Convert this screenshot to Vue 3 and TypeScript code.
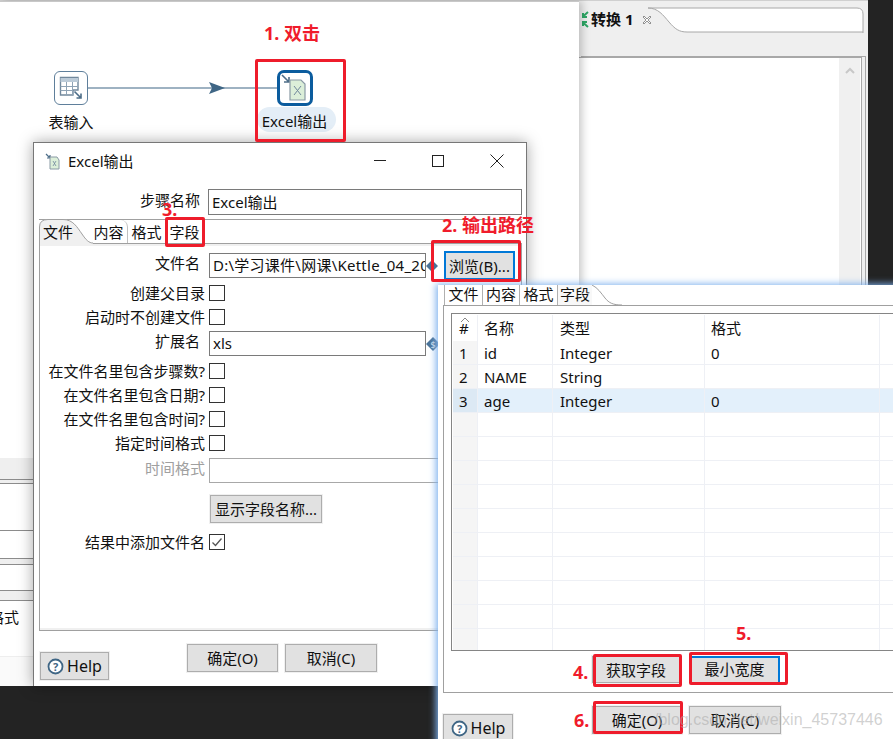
<script setup lang="ts">
const leftRows = ['创建父目录', '启动时不创建文件'];
const lowerRows = ['在文件名里包含步骤数?', '在文件名里包含日期?', '在文件名里包含时间?', '指定时间格式'];
const tabs = ['内容', '格式', '字段'];
const fields = [
  { n: '1', name: 'id', type: 'Integer', fmt: '0' },
  { n: '2', name: 'NAME', type: 'String', fmt: '' },
  { n: '3', name: 'age', type: 'Integer', fmt: '0', sel: true },
];
const emptyRows = Array.from({ length: 10 }, (_, i) => i);
// strips of the window hidden behind the dialog
const behindRows = [
  { h: 22, gray: true },
  { h: 4, gray: true },
  { h: 47 },
  { h: 28 },
  { h: 6, gray: true },
  { h: 26 },
  { h: 10, gray: true },
];
const notes = [
  { text: '1. 双击', x: 264, y: 21 },
  { text: '3.', x: 162, y: 197 },
  { text: '2. 输出路径', x: 442, y: 213 },
  { text: '5.', x: 736, y: 621 },
  { text: '4.', x: 573, y: 660 },
  { text: '6.', x: 574, y: 708 },
];
const boxes = [
  { x: 255, y: 59, w: 91, h: 83 },
  { x: 165, y: 217, w: 40, h: 30 },
  { x: 431, y: 240, w: 90, h: 42 },
  { x: 593, y: 654, w: 89, h: 33 },
  { x: 689, y: 652, w: 99, h: 33 },
  { x: 593, y: 701, w: 90, h: 33 },
];
</script>

<template>
  <div class="screen">
    <!-- spoon behind the dialogs -->
    <div class="spoon">
      <div class="pane">
        <div class="tabstrip">
          <svg class="tabcurve" width="285" height="26" viewBox="0 0 285 26">
            <path d="M69 1C79 1 84 8 90 15C96 22 100 25 108 25H284V6Q284 1 279 1Z" fill="#fff" />
            <path d="M69 1C79 1 84 8 90 15C96 22 100 25 108 25H284M69 1H278Q284 1 284 7V26" fill="none" stroke="#a8a8a8" />
          </svg>
          <svg class="transicon" width="10" height="17" viewBox="0 0 10 17">
            <path d="M8 1L3 5.500M3 2V6H7M8 16L3 11.500M3 15V11H7" fill="none" stroke="#2fa866" stroke-width="2" />
          </svg>
          <span class="tabname">转换 1</span>
          <svg class="tabclose" width="10" height="10" viewBox="0 0 10 10">
            <path d="M1 2L2 1L5 4L8 1L9 2L6 5L9 8L8 9L5 6L2 9L1 8L4 5Z" fill="#fff" stroke="#777" stroke-width=".8" />
          </svg>
        </div>
        <div class="editor">
          <div class="scrollbar">
            <svg width="10" height="7" viewBox="0 0 10 7"><path d="M1 6L5 2L9 6" fill="none" stroke="#c8c8c8" stroke-width="2" /></svg>
          </div>
        </div>
      </div>
    </div>

    <div class="canvas">
      <svg class="hop" width="192" height="16" viewBox="0 0 192 16">
        <path d="M0 8H190" stroke="#3f6685" stroke-width="1.200" />
        <path d="M121 2L137 8L121 14L124 8Z" fill="#3f6685" />
      </svg>
      <div class="node node-in">
        <svg width="24" height="24" viewBox="0 0 24 24">
          <path d="M1.500 1.500H19V14H14V19H1.500Z" fill="#fff" stroke="#71889c" stroke-width="1.400" />
          <path d="M1.500 2H19V6H1.500Z" fill="#bccbd8" />
          <path d="M1.500 10.500H19M1.500 14.500H14M7.500 6V19M13.500 6V19" stroke="#8fa3b5" />
          <path d="M15.500 15.500L22 22M22 17.500V22H17.500" fill="none" stroke="#4d6d88" stroke-width="1.600" />
        </svg>
      </div>
      <div class="nodelabel label-in">表输入</div>
      <div class="node node-out">
        <svg width="28" height="28" viewBox="0 0 28 28">
          <path d="M1 1L8 8M8 3V8H3" fill="none" stroke="#4d6d88" stroke-width="1.600" />
          <path d="M9 6H20L24 10V26H9Z" fill="#dcefd9" stroke="#8a9aa5" stroke-width="1.200" />
          <path d="M13 12L20 21M20 12L13 21" stroke="#71889c" />
        </svg>
      </div>
      <div class="nodelabel label-out">Excel输出</div>
    </div>

    <div class="behind">
      <div v-for="(r, i) in behindRows" :key="i" class="b-row" :class="{ 'b-gray': r.gray }" :style="{ height: r.h + 'px' }"></div>
      <div class="b-fmt"><span>格式</span></div>
      <div class="b-foot"></div>
    </div>

    <!-- excel output dialog -->
    <section class="dialog d1">
      <header class="titlebar">
        <svg class="ticon" width="16" height="17" viewBox="0 0 16 17">
          <path d="M1 1L5 5M5 2V5H2" fill="none" stroke="#4d6d88" stroke-width="1.200" />
          <path d="M5 4H12L14 7V16H5Z" fill="#dcefd9" stroke="#8a9aa5" />
          <path d="M8 8L11 13M11 8L8 13" stroke="#71889c" stroke-width=".8" />
        </svg>
        <span class="ttext">Excel输出</span>
        <svg class="wctl" width="130" height="14" viewBox="0 0 130 14">
          <path d="M0 6.500H12" stroke="#222" />
          <rect x="58.500" y="1.500" width="11" height="11" fill="none" stroke="#222" />
          <path d="M116.500 .5L129.500 13.500M129.500 .5L116.500 13.500" stroke="#222" />
        </svg>
      </header>
      <div class="stepname">
        <span class="stepname-label">步骤名称</span>
        <div class="input stepname-input">Excel输出</div>
      </div>
      <div class="folder">
        <div class="tabs">
          <div class="tab tab-on">
            <svg class="tab-curve" width="54" height="26" viewBox="0 0 54 26">
              <path d="M0 26V8Q0 .5 9 .5H24C34 .5 38 8 43 15C47 21 50 24 54 24V26Z" fill="#f0f0f0" />
              <path d="M.5 26V8Q.5 .5 9 .5H24C34 .5 38 8 43 15C47 21 50 24 54 24" fill="none" stroke="#a0a0a0" />
            </svg>
            <span>文件</span>
          </div>
          <div v-for="t in tabs" :key="t" class="tab">{{ t }}</div>
        </div>
        <div class="panel">
          <div class="row row-first">
            <span class="lab lab-in">文件名</span>
            <div class="input file-input path-input">D:\学习课件\网课\Kettle_04_20</div>
            <svg class="diamond" width="12" height="12" viewBox="0 0 12 12"><path d="M6 0L12 6L6 12L0 6Z" fill="#4a7297" /></svg>
            <button class="btn browse">浏览(B)...</button>
          </div>
          <div class="checks-top">
            <div v-for="r in leftRows" :key="r" class="row row-check">
              <span class="lab">{{ r }}</span><span class="check"></span>
            </div>
          </div>
          <div class="row row-ext">
            <span class="lab lab-in">扩展名</span>
            <div class="input file-input">xls</div>
            <svg class="diamond" width="14" height="14" viewBox="0 0 14 14">
              <path d="M7 0L14 7L7 14L0 7Z" fill="#4a7297" />
              <text x="7" y="10.500" text-anchor="middle" font-size="9" fill="#dde6ee">$</text>
            </svg>
          </div>
          <div class="lower">
            <div v-for="l in lowerRows" :key="l" class="row row-check">
              <span class="lab">{{ l }}</span><span class="check"></span>
            </div>
          </div>
          <div class="row row-time">
            <span class="lab lab-off">时间格式</span>
            <div class="input time-input"></div>
          </div>
          <button class="btn show">显示字段名称...</button>
          <div class="row row-result">
            <span class="lab">结果中添加文件名</span>
            <span class="check">
              <svg width="14" height="14" viewBox="0 0 14 14"><path d="M2.500 7.500L5.500 10.500L11.500 3.500" fill="none" stroke="#555" stroke-width="1.300" /></svg>
            </span>
          </div>
        </div>
      </div>
      <footer class="foot1">
        <button class="btn help">
          <svg width="17" height="17" viewBox="0 0 17 17">
            <circle cx="8.500" cy="8.500" r="7" fill="#fff" stroke="#3f6685" stroke-width="1.800" />
            <text x="8.500" y="12.500" text-anchor="middle" font-size="11" font-weight="700" fill="#3f6685">?</text>
          </svg>
          <span>Help</span>
        </button>
        <button class="btn ok1">确定(O)</button>
        <button class="btn cancel1">取消(C)</button>
      </footer>
    </section>

    <!-- fields tab, pasted on top -->
    <section class="dialog d2">
      <div class="tabs2">
        <div class="tab2">文件</div>
        <div class="tab2 tab2-mid">内容</div>
        <div class="tab2">格式</div>
        <div class="tab2 tab2-on">
          字段
          <svg class="tab2-curve" width="30" height="21" viewBox="0 0 30 21">
            <path d="M0 0C6 3 9 8 13 13C17 18 21 20 30 20" fill="none" stroke="#a0a0a0" />
          </svg>
        </div>
      </div>
      <div class="panel2">
        <div class="grid">
          <div class="g-row g-head">
            <div class="c c0">
              <svg class="sort" width="10" height="5" viewBox="0 0 10 5"><path d="M1 5L5 1L9 5" fill="none" stroke="#888" /></svg>
              #
            </div>
            <div class="c c1">名称</div>
            <div class="c c2">类型</div>
            <div class="c c3">格式</div>
            <div class="c c4"></div>
          </div>
          <div v-for="f in fields" :key="f.n" class="g-row" :class="{ 'g-sel': f.sel }">
            <div class="c c0">{{ f.n }}</div>
            <div class="c c1">{{ f.name }}</div>
            <div class="c c2">{{ f.type }}</div>
            <div class="c c3">{{ f.fmt }}</div>
            <div class="c c4"></div>
          </div>
          <div v-for="i in emptyRows" :key="i" class="g-row">
            <div class="c c0"></div>
            <div class="c c1"></div>
            <div class="c c2"></div>
            <div class="c c3"></div>
            <div class="c c4"></div>
          </div>
        </div>
        <div class="gridbtns">
          <button class="btn getf">获取字段</button>
          <button class="btn minw">最小宽度</button>
        </div>
      </div>
      <footer class="foot2">
        <button class="btn help help2">
          <svg width="17" height="17" viewBox="0 0 17 17">
            <circle cx="8.500" cy="8.500" r="7" fill="#fff" stroke="#3f6685" stroke-width="1.800" />
            <text x="8.500" y="12.500" text-anchor="middle" font-size="11" font-weight="700" fill="#3f6685">?</text>
          </svg>
          <span>Help</span>
        </button>
        <button class="btn ok2">确定(O)</button>
        <button class="btn cancel2">取消(C)</button>
      </footer>
    </section>

    <!-- red annotations -->
    <div v-for="b in boxes" :key="b.x + '-' + b.y" class="redbox" :style="{ left: b.x + 'px', top: b.y + 'px', width: b.w + 'px', height: b.h + 'px' }"></div>
    <div v-for="n in notes" :key="n.text" class="note" :style="{ left: n.x + 'px', top: n.y + 'px' }">{{ n.text }}</div>
    <div class="watermark">/blog.csdn.net/weixin_45737446</div>
  </div>
</template>

<style>
html,
body {
  margin: 0;
  background: #1f1f1f;
}
</style>

<style scoped>
.screen {
  position: relative;
  width: 893px;
  height: 739px;
  overflow: hidden;
  background: #232323;
  color: #111;
  font-family: "Noto Sans", "Noto Sans CJK SC", sans-serif;
  font-size: 15px;
  line-height: 20px;
}

button {
  font: inherit;
  color: inherit;
  padding: 0;
}

.spoon {
  position: absolute;
  left: 0;
  top: 0;
  width: 868px;
  height: 686px;
  background: #efefef;
  border-top: 1px solid #d0d0d0;
  box-sizing: border-box;
}

.pane {
  margin-left: 579px;
  width: 285px;
  height: 100%;
  padding-top: 6px;
  box-sizing: border-box;
  display: flex;
  flex-direction: column;
}

.tabstrip {
  position: relative;
  height: 25px;
  display: flex;
  align-items: center;
  flex: none;
}

.tabcurve {
  position: absolute;
  left: 0;
  top: 0;
}

.transicon {
  position: relative;
  margin-left: 1px;
}

.tabname {
  position: relative;
  margin-left: 1px;
  margin-top: -2px;
  font-weight: 700;
}

.tabclose {
  position: relative;
  margin-left: 9px;
}

.editor {
  margin-top: 25px;
  width: 282px;
  flex: 1;
  background: #fff;
  border-top: 1px solid #a8a8a8;
  border-right: 1px solid #a8a8a8;
  display: flex;
  justify-content: flex-end;
  box-shadow: 3px 0 0 #efefef, 3px 0 0 1px #a8a8a8;
}

.scrollbar {
  width: 21px;
  background: #f0f0f0;
  display: flex;
  justify-content: center;
  padding-top: 9px;
  margin-right: 1px;
}

.canvas {
  position: absolute;
  left: 0;
  top: 1px;
  width: 579px;
  height: 457px;
  background: #fff;
  border-top: 1px solid #c8c8c8;
  box-shadow: 3px 0 8px rgba(0, 0, 0, 0.22);
}

.hop {
  position: absolute;
  left: 88px;
  top: 78px;
}

.node {
  position: absolute;
  background: #fff;
  display: flex;
  align-items: center;
  justify-content: center;
  box-sizing: border-box;
}

.node-in {
  left: 54px;
  top: 69px;
  width: 34px;
  height: 34px;
  border: 1px solid #5f7f9b;
  border-radius: 6px;
}

.node-out {
  left: 277px;
  top: 68px;
  width: 36px;
  height: 36px;
  border: 3px solid #0b5c9e;
  border-radius: 7px;
}

.nodelabel {
  position: absolute;
  text-align: center;
}

.label-in {
  left: 41px;
  top: 110px;
  width: 60px;
}

.label-out {
  left: 257px;
  top: 105px;
  width: 79px;
  height: 25px;
  line-height: 29px;
  padding-right: 4px;
  box-sizing: border-box;
  border-radius: 13px;
  background: #e4eef7;
}

.behind {
  position: absolute;
  left: 0;
  top: 458px;
  width: 40px;
  height: 228px;
  background: #fff;
  display: flex;
  flex-direction: column;
}

.b-row {
  box-sizing: border-box;
  border-bottom: 1px solid #8c8c8c;
  flex: none;
}

.b-gray {
  background: #efefef;
}

.b-fmt {
  height: 56px;
  padding-top: 6px;
  box-sizing: border-box;
  border-bottom: 1px solid #eeeeee;
  overflow: hidden;
  flex: none;
}

.b-fmt span {
  margin-left: -11px;
}

.b-foot {
  flex: 1;
  background: #fafafa;
}

.dialog {
  position: absolute;
  box-sizing: border-box;
  background: #fff;
}

.d1 {
  left: 33px;
  top: 142px;
  width: 494px;
  height: 544px;
  border: 1px solid #777;
  border-bottom: 0;
  box-shadow: 0 0 14px rgba(0, 0, 0, 0.35);
  display: flex;
  flex-direction: column;
}

.titlebar {
  height: 37px;
  display: flex;
  align-items: center;
  padding-left: 11px;
  flex: none;
}

.ticon {
  flex: none;
}

.ttext {
  margin-left: 7px;
  margin-top: -2px;
  flex: 1;
}

.wctl {
  margin-right: 22px;
  margin-top: -1px;
}

.stepname {
  margin: 9px 4px 0 0;
  display: flex;
  align-items: center;
  height: 25px;
  flex: none;
}

.stepname-label {
  width: 166px;
  text-align: right;
  margin-top: -4px;
}

.input {
  box-sizing: border-box;
  border: 1px solid #7a7a7a;
  height: 25px;
  line-height: 25px;
  padding-left: 3px;
  background: #fff;
  white-space: nowrap;
  overflow: hidden;
}

.stepname-input {
  margin-left: 8px;
  width: 314px;
  height: 26px;
}

.folder {
  margin: 5px 4px 0 5px;
  width: 483px;
  display: flex;
  flex-direction: column;
  flex: none;
}

.tabs {
  display: flex;
  height: 25px;
  box-sizing: border-box;
  border-top: 1px solid #a0a0a0;
  border-bottom: 1px solid #a0a0a0;
}

.tab {
  position: relative;
  width: 38px;
  text-align: center;
  line-height: 24px;
  border-right: 1px solid #c0c0c0;
  box-sizing: border-box;
  flex: none;
}

.tab:nth-child(2) {
  border-top-right-radius: 7px;
}

.tab-on {
  width: 51px;
  text-align: left;
  padding-left: 4px;
  border-right: 0;
}

.tab-on span {
  position: relative;
}

.tab-curve {
  position: absolute;
  left: 0;
  top: -1px;
}

.panel {
  height: 387px;
  box-sizing: border-box;
  border-left: 1px solid #a0a0a0;
  border-bottom: 1px solid #a0a0a0;
  border-right: 1px solid #a0a0a0;
  padding-top: 9px;
  position: relative;
  box-shadow: inset 0 2px 0 #f0f0f0, inset 0 -2px 0 #f0f0f0;
}

.row {
  display: flex;
  align-items: center;
}

.lab {
  width: 165px;
  flex: none;
  text-align: right;
  white-space: nowrap;
  margin-top: -1px;
}

.lab-in {
  padding-right: 5px;
  box-sizing: border-box;
  margin-top: -5px;
}

.lab-off {
  color: #a0a0a0;
  margin-top: -6px;
}

.row-first {
  height: 25px;
}

.file-input {
  margin-left: 4px;
  width: 217px;
  line-height: 23px;
}

.path-input {
  letter-spacing: 0.25px;
}

.diamond {
  flex: none;
}

.btn {
  box-sizing: border-box;
  background: #e1e1e1;
  border: 1px solid #adadad;
  outline: 1px solid #f0f0f0;
  display: block;
}

.browse {
  margin-left: 6px;
  width: 71px;
  height: 29px;
  border: 2px solid #0078d7;
  outline: 0;
  white-space: nowrap;
  flex: none;
}

.checks-top {
  margin-top: 3px;
}

.row-check {
  height: 24px;
}

.check {
  margin-left: 4px;
  width: 16px;
  height: 16px;
  box-sizing: border-box;
  border: 1px solid #333;
  background: #fff;
  display: block;
  flex: none;
}

.check svg {
  display: block;
}

.row-ext {
  height: 25px;
  margin-top: 2px;
}

.lower {
  margin-top: 3px;
}

.row-time {
  margin-top: 3px;
}

.time-input {
  margin-left: 4px;
  width: 240px;
  border-color: #a8a8a8;
}

.show {
  margin: 12px 0 0 170px;
  width: 112px;
  height: 28px;
  white-space: nowrap;
}

.row-result {
  margin-top: 11px;
  height: 16px;
}

.foot1 {
  display: flex;
  align-items: flex-start;
  padding-left: 6px;
}

.help {
  display: flex;
  align-items: center;
  gap: 3px;
  justify-content: center;
  width: 69px;
  height: 28px;
  margin-top: 21px;
  font-size: 16px;
}

.help span {
  margin-top: -1px;
}

.ok1 {
  margin: 13px 0 0 78px;
  width: 91px;
  height: 28px;
}

.cancel1 {
  margin: 13px 0 0 7px;
  width: 92px;
  height: 28px;
}

.d2 {
  left: 438px;
  top: 285px;
  width: 470px;
  height: 470px;
  box-shadow: -2px -1px 7px #7fb2ee;
  z-index: 2;
}

.tabs2 {
  display: flex;
  height: 20px;
  padding-left: 6px;
  position: relative;
}

.tab2 {
  width: 38px;
  line-height: 19px;
  text-align: center;
  border-left: 1px solid #b0b0b0;
  box-sizing: border-box;
  position: relative;
  flex: none;
}

.tab2-mid {
  width: 37px;
}

.tab2-on {
  background: #f8f8f8;
  width: 35px;
}

.tab2-curve {
  position: absolute;
  left: 34px;
  top: 0;
}

.panel2 {
  margin-left: 5px;
  height: 388px;
  box-sizing: border-box;
  border-top: 1px solid #a0a0a0;
  border-left: 1px solid #a0a0a0;
  border-bottom: 1px solid #a0a0a0;
  padding: 7px 0 0 7px;
}

.grid {
  height: 338px;
  box-sizing: border-box;
  border: 1px solid #858585;
  padding: 1px;
  overflow: hidden;
}

.g-row {
  display: flex;
  height: 24px;
}

.g-head {
  height: 26px;
}

.c {
  box-sizing: border-box;
  padding-left: 6px;
  line-height: 24px;
  border-right: 1px solid #eef0f5;
  border-bottom: 1px solid #eef0f5;
  white-space: nowrap;
  flex: none;
}

.c0 {
  width: 25px;
  background: #f5f5f5;
  position: relative;
}

.c1 {
  width: 75px;
}

.c2 {
  width: 152px;
  padding-left: 7px;
}

.c3 {
  width: 175px;
}

.c4 {
  width: 40px;
  border-right: 0;
}

.g-head .c {
  line-height: 26px;
  border-bottom: 0;
  background: #fff;
}

.sort {
  position: absolute;
  left: 7px;
  top: 2px;
}

.g-sel .c {
  background: #e3f0fb;
}

.g-sel .c0 {
  background: #dce9f4;
}

.gridbtns {
  display: flex;
  padding-left: 141px;
  margin-top: 5px;
}

.getf {
  width: 88px;
  height: 27px;
}

.minw {
  margin-left: 9px;
  width: 91px;
  height: 27px;
  padding: 0 0 3px 2px;
  border: 2px solid #0078d7;
  border-left: 0;
  border-bottom: 0;
  outline: 0;
}

.foot2 {
  display: flex;
  padding-left: 5px;
  align-items: flex-start;
}

.help2 {
  width: 70px;
  margin-top: 21px;
}

.ok2 {
  margin: 13px 0 0 79px;
  width: 90px;
  height: 28px;
}

.cancel2 {
  margin: 13px 0 0 7px;
  width: 92px;
  height: 28px;
}

.redbox {
  position: absolute;
  box-sizing: border-box;
  border: 3px solid #ee1c2b;
  border-radius: 2px;
  z-index: 3;
}

.note {
  position: absolute;
  z-index: 3;
  color: #f01c2c;
  font-size: 18px;
  font-weight: 700;
  line-height: 24px;
  white-space: nowrap;
}

.watermark {
  position: absolute;
  z-index: 4;
  left: 654px;
  top: 710px;
  font-family: "Liberation Sans", sans-serif;
  font-size: 16px;
  color: rgba(170, 170, 170, 0.55);
  white-space: nowrap;
}
</style>
